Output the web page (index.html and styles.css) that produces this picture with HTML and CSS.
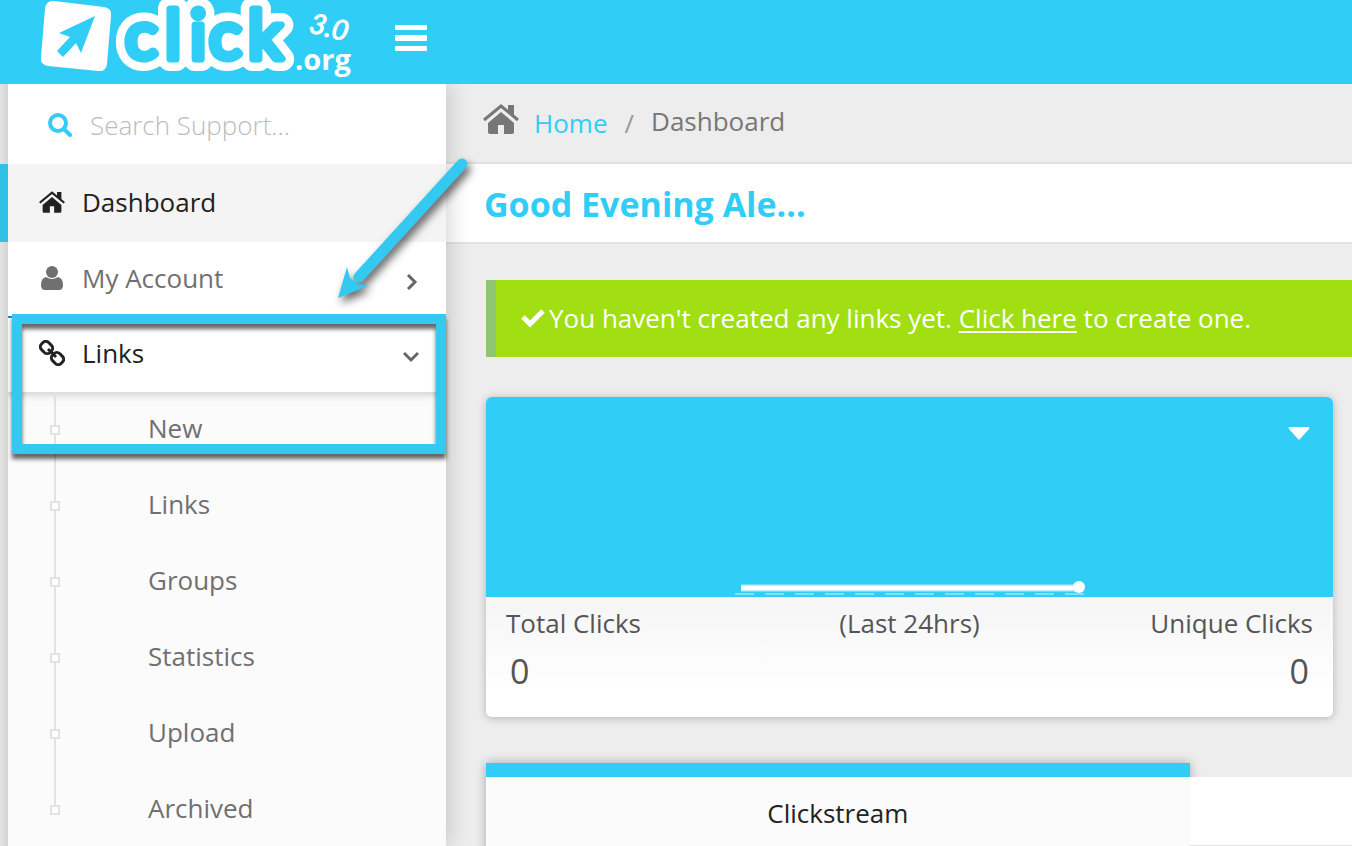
FILE: index.html
```
<!DOCTYPE html>
<html lang="en">
<head>
    <meta charset="UTF-8">
    <meta name="viewport" content="width=device-width, initial-scale=1.0">
    <title>Dashboard - click.org</title>
    <link rel="stylesheet" href="styles.css">
</head>
<body>
    <svg class="symbols" aria-hidden="true">
        <symbol id="icon-home" viewBox="0 0 36 30">
            <path d="M18 8L31 19V28Q31 30 29 30H21V21H15V30H7Q5 30 5 28V19Z"/>
            <path d="M1 16L18 2L35 16" fill="none" stroke="currentColor" stroke-width="3"/>
            <path d="M25 1H31V12L25 7Z"/>
        </symbol>
    </svg>

    <header class="header">
        <a class="logo" href="#" aria-label="click.org 3.0">
            <svg width="320" height="84" viewBox="40 0 320 84">
                <path d="M54 1L104 7Q112 8 111 16L107 64Q106 72 98 71L48 66Q40 65 41 57L45 9Q46 0 54 1Z" fill="#fff"/>
                <path d="M95 16L59 33L70 37L57 51L63 57L76 43L81 53Z" fill="#30cdf6"/>
                <text class="logo-outline" y="59" x="125 165 190 209 248">click</text>
                <text class="logo-word" y="59" x="125 165 190 209 248">click</text>
                <text class="logo-version" x="308" y="32" transform="rotate(14 308 32)">3.0</text>
                <text class="logo-domain" x="295" y="70">.org</text>
            </svg>
        </a>
        <button class="menu-toggle" aria-label="Toggle menu">
            <svg width="32" height="26" viewBox="0 0 32 26">
                <rect width="32" height="5" rx="1"/>
                <rect y="10" width="32" height="6" rx="1"/>
                <rect y="21" width="32" height="5" rx="1"/>
            </svg>
        </button>
    </header>

    <div class="layout">
        <aside class="sidebar">
            <form class="search">
                <svg width="24" height="24" viewBox="0 0 24 24">
                    <g fill="none" stroke="#30cdf6" stroke-width="4" stroke-linecap="round">
                        <circle cx="10" cy="10" r="8"/>
                        <path d="M16 16L22 22"/>
                    </g>
                </svg>
                <input type="text" placeholder="Search Support..." aria-label="Search Support">
            </form>
            <nav>
                <a class="nav-item active" href="#">
                    <svg width="26" height="22"><use href="#icon-home"/></svg>
                    <span>Dashboard</span>
                </a>
                <a class="nav-item" href="#">
                    <svg width="26" height="26" viewBox="0 0 26 26">
                        <circle cx="13" cy="7" r="6"/>
                        <path d="M7 12Q13 16 19 12Q24 13 24 20Q24 25 20 25H6Q2 25 2 20Q2 13 7 12Z"/>
                    </svg>
                    <span>My Account</span>
                    <svg class="chevron" width="16" height="16" viewBox="0 0 16 16"><path d="M5 1L12 8L5 15"/></svg>
                </a>
                <a class="nav-item open" href="#">
                    <svg width="26" height="26" viewBox="0 0 26 26">
                        <g fill="none" stroke="currentColor" stroke-width="3">
                            <rect x="-6" y="-5" width="12" height="10" rx="4" transform="translate(7.5 7.5) rotate(45)"/>
                            <rect x="-6" y="-5" width="12" height="10" rx="4" transform="translate(18.5 18.5) rotate(45)"/>
                            <path d="M9 9L17 17"/>
                        </g>
                    </svg>
                    <span>Links</span>
                    <svg class="chevron" width="16" height="16" viewBox="0 0 16 16"><path d="M1 4L8 11L15 4"/></svg>
                </a>
                <ul class="submenu">
                    <li><a href="#">New</a></li>
                    <li><a href="#">Links</a></li>
                    <li><a href="#">Groups</a></li>
                    <li><a href="#">Statistics</a></li>
                    <li><a href="#">Upload</a></li>
                    <li><a href="#">Archived</a></li>
                </ul>
            </nav>
        </aside>

        <main class="main">
            <div class="breadcrumb">
                <svg width="36" height="30"><use href="#icon-home"/></svg>
                <a href="#">Home</a>
                <span class="separator">/</span>
                <span class="current">Dashboard</span>
            </div>
            <h1 class="greeting">Good Evening Ale...</h1>

            <div class="content">
                <div class="alert">
                    <svg width="24" height="20" viewBox="0 0 24 20"><path d="M2 9L9 16L22 3" fill="none" stroke="#fff" stroke-width="5"/></svg>
                    <p>You haven't created any links yet. <a href="#">Click here</a> to create one.</p>
                </div>

                <section class="clicks-card">
                    <div class="clicks-chart">
                        <button class="card-menu" aria-label="Card options">
                            <svg width="22" height="13" viewBox="0 0 22 13"><path d="M1 0H21Q22 1 21 2L12 12Q11 13 10 12L1 2Q0 1 1 0Z"/></svg>
                        </button>
                        <svg width="350" height="18" viewBox="0 0 350 18">
                            <path d="M6 9H344" stroke="#b7ecfb" stroke-width="7"/>
                            <path d="M6 9H344" stroke="#fff" stroke-width="4"/>
                            <path d="M0 15H350" stroke="#83e0f9" stroke-width="2" stroke-dasharray="19 11"/>
                            <circle cx="344" cy="8" r="6" fill="#fff"/>
                        </svg>
                    </div>
                    <div class="clicks-stats">
                        <div class="stat">
                            <span>Total Clicks</span>
                            <strong>0</strong>
                        </div>
                        <div class="stat">
                            <span>(Last 24hrs)</span>
                        </div>
                        <div class="stat stat-right">
                            <span>Unique Clicks</span>
                            <strong>0</strong>
                        </div>
                    </div>
                </section>

                <div class="tabs">
                    <button class="tab active">Clickstream</button>
                    <div class="tab-rest"></div>
                </div>
            </div>
        </main>
    </div>

    <!-- Walkthrough callout over the Links menu -->
    <div class="callout-box"></div>
    <svg class="callout-arrow" width="150" height="160" viewBox="0 0 150 160">
        <path d="M132 14L29 127" stroke="#34c9f1" stroke-width="11" stroke-linecap="round"/>
        <path d="M8 148L17 117L20 128L28 134L38 136Z" fill="#34c9f1"/>
    </svg>
</body>
</html>
```
FILE: styles.css
```
*,
*::before {
    margin: 0;
    padding: 0;
    box-sizing: border-box;
}

body {
    font-family: "Open Sans", sans-serif;
    font-size: 26px;
    line-height: 36px;
    color: #555;
    background: #ededed;
    position: relative;
    height: 100vh;
    display: flex;
    flex-direction: column;
    overflow: hidden;
}

a {
    color: inherit;
    text-decoration: none;
}

button,
input {
    font: inherit;
    border: none;
    background: none;
}

button {
    cursor: pointer;
}

svg {
    display: block;
    flex-shrink: 0;
    fill: currentColor;
}

.symbols {
    position: absolute;
    width: 0;
    height: 0;
}

/* Header */
.header {
    height: 84px;
    flex-shrink: 0;
    background: #30cdf6;
    display: flex;
    align-items: flex-start;
    gap: 35px;
    padding-left: 40px;
    position: relative;
    z-index: 2;
}

.menu-toggle {
    margin-top: 25px;
    color: #fff;
}

.logo-outline,
.logo-word {
    font-family: Lato, sans-serif;
    font-size: 68px;
    stroke-linejoin: round;
}

.logo-outline {
    fill: #fff;
    stroke: #fff;
    stroke-width: 24px;
}

.logo-word {
    fill: #30cdf6;
    stroke: #30cdf6;
    stroke-width: 7px;
}

.logo-version {
    font-family: Lato, sans-serif;
    font-size: 28px;
    font-style: italic;
    fill: #fff;
    stroke: #fff;
}

.logo-domain {
    font-size: 29px;
    font-weight: 700;
    fill: #fff;
}

/* Sidebar */
.layout {
    flex: 1;
    min-height: 0;
    display: flex;
}

.sidebar {
    width: 446px;
    flex-shrink: 0;
    padding-left: 8px;
    background: linear-gradient(to right, #e4e4e4, #d4d4d4 8px, #fff 8px);
    box-shadow: 4px 0 20px rgba(0, 0, 0, 0.16);
    position: relative;
    z-index: 1;
}

.search {
    height: 80px;
    display: flex;
    align-items: center;
    gap: 18px;
    padding: 2px 20px 0 40px;
}

.search input {
    flex: 1;
    min-width: 0;
    outline: none;
    font-weight: 300;
}

.search input::placeholder {
    color: #bbb;
    opacity: 1;
}

.nav-item {
    height: 76px;
    display: flex;
    align-items: center;
    gap: 17px;
    padding: 0 27px 4px 31px;
    color: #707070;
}

.nav-item span {
    flex: 1;
}

.nav-item.active {
    height: 78px;
    margin-left: -8px;
    padding-bottom: 2px;
    border-left: 8px solid #2fc1e6;
    background: #f4f4f4;
    color: #222;
}

.nav-item.open {
    border-top: 2px solid #3681b5;
    margin-top: -2px;
    color: #222;
}

.chevron {
    fill: none;
    stroke: #666;
    stroke-width: 3;
    margin-top: 8px;
}

.submenu {
    list-style: none;
    background: #fbfbfb;
    box-shadow: inset 0 10px 10px -8px rgba(0, 0, 0, 0.2);
}

.submenu li {
    height: 76px;
    display: flex;
    align-items: center;
    gap: 88px;
    padding-left: 42px;
    background: linear-gradient(#e2e2e2, #e2e2e2) 46px 0 / 2px 100% no-repeat;
    color: #707070;
}

.submenu a {
    padding-bottom: 4px;
}

.submenu li:last-child {
    background-size: 2px 50%;
}

.submenu li::before {
    content: '';
    width: 10px;
    height: 10px;
    border: 2px solid #e2e2e2;
    background: #fff;
}

/* Main column */
.main {
    flex: 1;
    min-width: 0;
}

.breadcrumb {
    height: 80px;
    border-bottom: 2px solid #e2e2e2;
    display: flex;
    align-items: center;
    padding-left: 37px;
    color: #777;
}

.breadcrumb svg {
    margin-bottom: 8px;
}

.breadcrumb a {
    margin-left: 15px;
    color: #30cdf6;
}

.separator {
    margin: 0 17px;
    color: #999;
}

.current {
    padding-bottom: 4px;
}

.greeting {
    height: 80px;
    border-bottom: 2px solid #e2e2e2;
    padding: 0 38px;
    background: #fff;
    font-size: 34px;
    line-height: 80px;
    color: #30cdf6;
}

.content {
    padding: 36px 0 0 40px;
}

.alert {
    display: flex;
    align-items: center;
    gap: 4px;
    padding: 20px 25px 21px;
    border-left: 10px solid #8dc572;
    background: #a1df12;
    color: #fff;
}

.alert a {
    text-decoration: underline;
    text-decoration-thickness: 2px;
    text-underline-offset: 3px;
}

.clicks-card {
    margin: 40px 19px 46px 0;
    border-radius: 6px;
    overflow: hidden;
    box-shadow: 0 1px 8px rgba(0, 0, 0, 0.25);
}

.clicks-chart {
    height: 200px;
    background: #30cdf6;
    display: flex;
    flex-direction: column;
    justify-content: space-between;
    align-items: center;
}

.card-menu {
    align-self: flex-end;
    padding: 30px 23px;
    color: #fff;
}

.clicks-stats {
    height: 120px;
    display: grid;
    grid-template-columns: 1fr 1fr 1fr;
    padding: 8px 20px;
    background: linear-gradient(#f5f5f5, #fff 80%);
    text-align: center;
}

.stat {
    display: flex;
    flex-direction: column;
    gap: 8px;
    align-items: center;
}

.stat:first-child {
    align-items: flex-start;
}

.stat-right {
    align-items: flex-end;
}

.stat strong {
    padding: 0 4px;
    font-size: 34px;
    line-height: 44px;
    font-weight: 400;
}

.tabs {
    display: grid;
    grid-template-columns: 13fr 3fr;
    align-items: start;
}

.tab {
    height: 100px;
    padding-bottom: 14px;
    border-top: 14px solid #30cdf6;
    background: #fbfbfb;
    box-shadow: 0 0 10px rgba(0, 0, 0, 0.3);
    color: #222;
}

.tab-rest {
    height: 70px;
    margin-top: 14px;
    border-bottom: 2px solid #e2e2e2;
    background: #fff;
}

/* Callout */
.callout-box {
    position: absolute;
    z-index: 3;
    left: 12px;
    top: 314px;
    width: 434px;
    height: 140px;
    border: 10px solid #34c9f1;
    filter: drop-shadow(0 5px 2px rgba(0, 0, 0, 0.6));
    pointer-events: none;
}

.callout-arrow {
    position: absolute;
    z-index: 3;
    left: 330px;
    top: 150px;
    filter: drop-shadow(3px 5px 4px rgba(0, 0, 0, 0.6));
    pointer-events: none;
}
```
